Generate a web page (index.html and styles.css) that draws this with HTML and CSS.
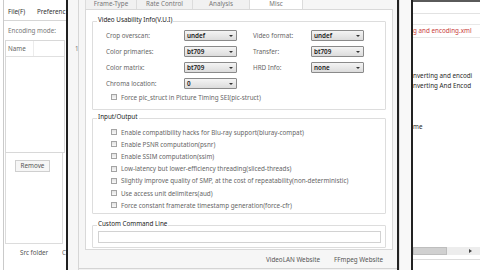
FILE: index.html
```html
<!DOCTYPE html>
<html>
<head>
<meta charset="utf-8">
<link rel="stylesheet" href="styles.css">
</head>
<body>
<div class="desk">
  <div class="lw">
    <div class="lw-in">
      <div class="menubar"><span class="m1">File(F)</span><span>Preferenc</span></div>
      <div class="encmode">Encoding mode:</div>
      <div class="listbox">
        <div class="lbhead"><span class="lbname">Name</span></div>
      </div>
      <div class="rmpanel"><div class="btn">Remove</div></div>
      <div class="srcrow"><span class="src">Src folder</span><span class="cc">C</span></div>
    </div>
  </div>
  <div class="strip1"><span class="mark">1</span></div>
  <div class="dialog">
    <div class="tabs">
      <div class="tab t1">Frame-Type</div>
      <div class="tab t2">Rate Control</div>
      <div class="tab t3">Analysis</div>
      <div class="tab t4 sel">Misc</div>
    </div>
    <div class="pane">
      <div class="group g1">
        <span class="glabel">Video Usability Info(V.U.I)</span>
        <div class="vui">
          <span class="lbl">Crop overscan:</span>
          <div class="combo"><span>undef</span><i class="arr"></i></div>
          <span class="lbl lbl2">Video format:</span>
          <div class="combo"><span>undef</span><i class="arr"></i></div>
          <span class="lbl">Color primaries:</span>
          <div class="combo"><span>bt709</span><i class="arr"></i></div>
          <span class="lbl lbl2">Transfer:</span>
          <div class="combo"><span>bt709</span><i class="arr"></i></div>
          <span class="lbl">Color matrix:</span>
          <div class="combo"><span>bt709</span><i class="arr"></i></div>
          <span class="lbl lbl2">HRD Info:</span>
          <div class="combo"><span>none</span><i class="arr"></i></div>
          <span class="lbl">Chroma location:</span>
          <div class="combo"><span>0</span><i class="arr"></i></div>
        </div>
        <div class="chk pic"><i class="box"></i><span>Force pic_struct in Picture Timing SEI(pic-struct)</span></div>
      </div>
      <div class="group g2">
        <span class="glabel">Input/Output</span>
        <div class="chk"><i class="box"></i><span>Enable compatibility hacks for Blu-ray support(bluray-compat)</span></div>
        <div class="chk"><i class="box"></i><span>Enable PSNR computation(psnr)</span></div>
        <div class="chk"><i class="box"></i><span>Enable SSIM computation(ssim)</span></div>
        <div class="chk"><i class="box"></i><span>Low-latency but lower-efficiency threading(sliced-threads)</span></div>
        <div class="chk"><i class="box"></i><span>Slightly improve quality of SMP, at the cost of repeatability(non-deterministic)</span></div>
        <div class="chk"><i class="box"></i><span>Use access unit delimiters(aud)</span></div>
        <div class="chk"><i class="box"></i><span>Force constant framerate timestamp generation(force-cfr)</span></div>
      </div>
      <div class="group g3">
        <span class="glabel">Custom Command Line</span>
        <div class="cmd"></div>
      </div>
    </div>
    <div class="links"><span>VideoLAN Website</span><span>FFmpeg Website</span></div>
  </div>
  <div class="dk"></div>
  <div class="strip2"></div>
  <div class="dk"></div>
  <div class="rw">
    <div class="rw-top"></div>
    <div class="rw-bar"></div>
    <div class="rw-red">g and encoding.xml</div>
    <div class="rw-t1">nverting and encodi</div>
    <div class="rw-t2">nverting And Encod</div>
    <div class="rw-t3">me</div>
    <div class="scroll"><div class="thumb"></div><i class="sarr"></i></div>
    <div class="rw-foot"></div>
  </div>
</div>
</body>
</html>
```

FILE: styles.css
```css
* { box-sizing: border-box; margin: 0; padding: 0; }
html, body { width: 480px; height: 270px; overflow: hidden; }
body {
  font-family: "Noto Sans", "Open Sans", sans-serif;
  font-size: 6.3px;
  color: #555;
  background: #f2f2f2;
}
.desk { display: flex; height: 270px; }

/* left window */
.lw { width: 68px; flex: none; background: #fff; border-right: 2px solid #1f1f1f; padding-left: 3px; }
.lw-in { height: 100%; border-left: 1px solid #cacaca; display: flex; flex-direction: column; overflow: hidden; white-space: nowrap; }
.menubar { height: 21px; flex: none; border-bottom: 1px solid #d6d6d6; display: flex; padding: 7px 0 0 4px; line-height: 10px; color: #333; }
.m1 { width: 29px; flex: none; }
.encmode { height: 19px; flex: none; line-height: 19px; padding-left: 4px; color: #777; }
.listbox { margin-left: 1px; width: 60px; height: 113px; flex: none; border: 1px solid #d8d8d8; }
.lbhead { height: 16px; border-bottom: 1px solid #e0e0e0; line-height: 15px; padding-left: 2px; display: flex; }
.lbname { width: 26px; border-right: 1px solid #ececec; color: #666; }
.rmpanel { margin-left: 1px; width: 58px; height: 91px; flex: none; border: 1px solid #dcdcdc; border-top: none; padding: 7px 0 0 9px; }
.btn { width: 35px; height: 12px; border: 1px solid #cfcfcf; background: #f6f6f6; text-align: center; line-height: 10px; color: #555; }
.srcrow { height: 17px; flex: none; line-height: 17px; display: flex; padding-left: 16px; color: #555; }
.src { width: 42px; flex: none; }
.cc { color: #666; }

.strip1 { width: 11px; flex: none; background: #f6f6f6; border-right: 1px solid #d6d6d6; padding: 44px 0 0 7px; }
.mark { line-height: 10px; color: #777; }

/* dialog */
.dialog { width: 318px; flex: none; height: 269px; background: #f6f6f6; padding: 0 4px 0 6px; display: flex; flex-direction: column; border-bottom: 1px solid #d4d4d4; }
.tabs { display: flex; height: 9px; flex: none; }
.tab { line-height: 8px; text-align: center; border-right: 1px solid #dcdcdc; background: #f1f1f1; color: #777; white-space: nowrap; overflow: hidden; }
.t1 { width: 52px; border-left: 1px solid #dcdcdc; }
.t2 { width: 56px; }
.t3 { width: 57px; }
.t4 { width: 53px; }
.tab.sel { background: #fff; }
.pane { height: 241px; flex: none; background: #fff; border: 1px solid #d9d9d9; padding: 0 6px; }

.group { border: 1px solid #dddddd; position: relative; border-radius: 1px; }
.glabel { position: absolute; top: -6px; left: 4px; line-height: 8px; background: #fff; padding: 0 1px; color: #222; white-space: nowrap; }
.g1 { margin-top: 11px; height: 89px; padding: 8px 0 0 13px; }
.vui { display: grid; grid-template-columns: 78px 53px 74px 53px; grid-auto-rows: 11px; row-gap: 5px; align-items: center; }
.lbl { color: #666; white-space: nowrap; line-height: 11px; }
.lbl2 { padding-left: 16px; }
.combo { height: 11px; border: 1px solid #8a8a8a; border-radius: 1px; background: linear-gradient(#f4f4f4, #dcdcdc); display: flex; align-items: center; justify-content: space-between; padding: 0 3px 0 2px; color: #1a1a1a; font-weight: 600; line-height: 9px; }
.arr { width: 0; height: 0; border-left: 2px solid transparent; border-right: 2px solid transparent; border-top: 2.5px solid #333; }

.chk { display: flex; align-items: center; height: 12.2px; white-space: nowrap; color: #666; }
.chk .box { width: 6px; height: 6px; flex: none; border: 1px solid #a4a4a4; background: linear-gradient(#e2e2e2, #f8f8f8); margin-right: 4px; }
.pic { margin: 3px 0 0 5px; height: 10px; }
.g2 { margin-top: 8px; height: 96px; padding: 7px 0 0 18px; }
.g3 { margin-top: 11px; height: 23px; padding: 5px 4px 0 5px; }
.cmd { height: 12px; border: 1px solid #d2d2d2; background: #fff; }

.links { height: 18px; flex: none; display: flex; justify-content: flex-end; align-items: center; gap: 14px; padding-right: 10px; color: #555; white-space: nowrap; }

.dk { width: 2px; flex: none; background: #222; }
.strip2 { width: 12px; flex: none; background: #f8f8f8; border-left: 1px solid #e0e0e0; }

/* right window */
.rw { flex: 1; background: #fff; display: flex; flex-direction: column; white-space: nowrap; overflow: hidden; color: #2a2a2a; }
.rw-top { height: 2px; flex: none; background: #5a5a5a; }
.rw-bar { height: 12px; flex: none; border-bottom: 1px solid #e2e2e2; }
.rw-red { margin-top: 10px; height: 14px; flex: none; border-top: 1px solid #e8e8e8; border-bottom: 1px solid #e8e8e8; line-height: 12px; color: #c94040; }
.rw-t1 { margin-top: 33px; line-height: 10px; }
.rw-t2 { line-height: 10px; }
.rw-t3 { margin-top: 31px; line-height: 10px; }
.scroll { margin-top: auto; height: 8px; flex: none; background: #ededed; display: flex; align-items: center; justify-content: space-between; padding-right: 8px; }
.thumb { width: 34px; height: 8px; background: #d0d0d0; border: 1px solid #bebebe; }
.sarr { width: 0; height: 0; border-top: 2px solid transparent; border-bottom: 2px solid transparent; border-left: 3px solid #444; }
.rw-foot { height: 11px; flex: none; margin-top: 4px; border-top: 1px solid #dcdcdc; }
```
